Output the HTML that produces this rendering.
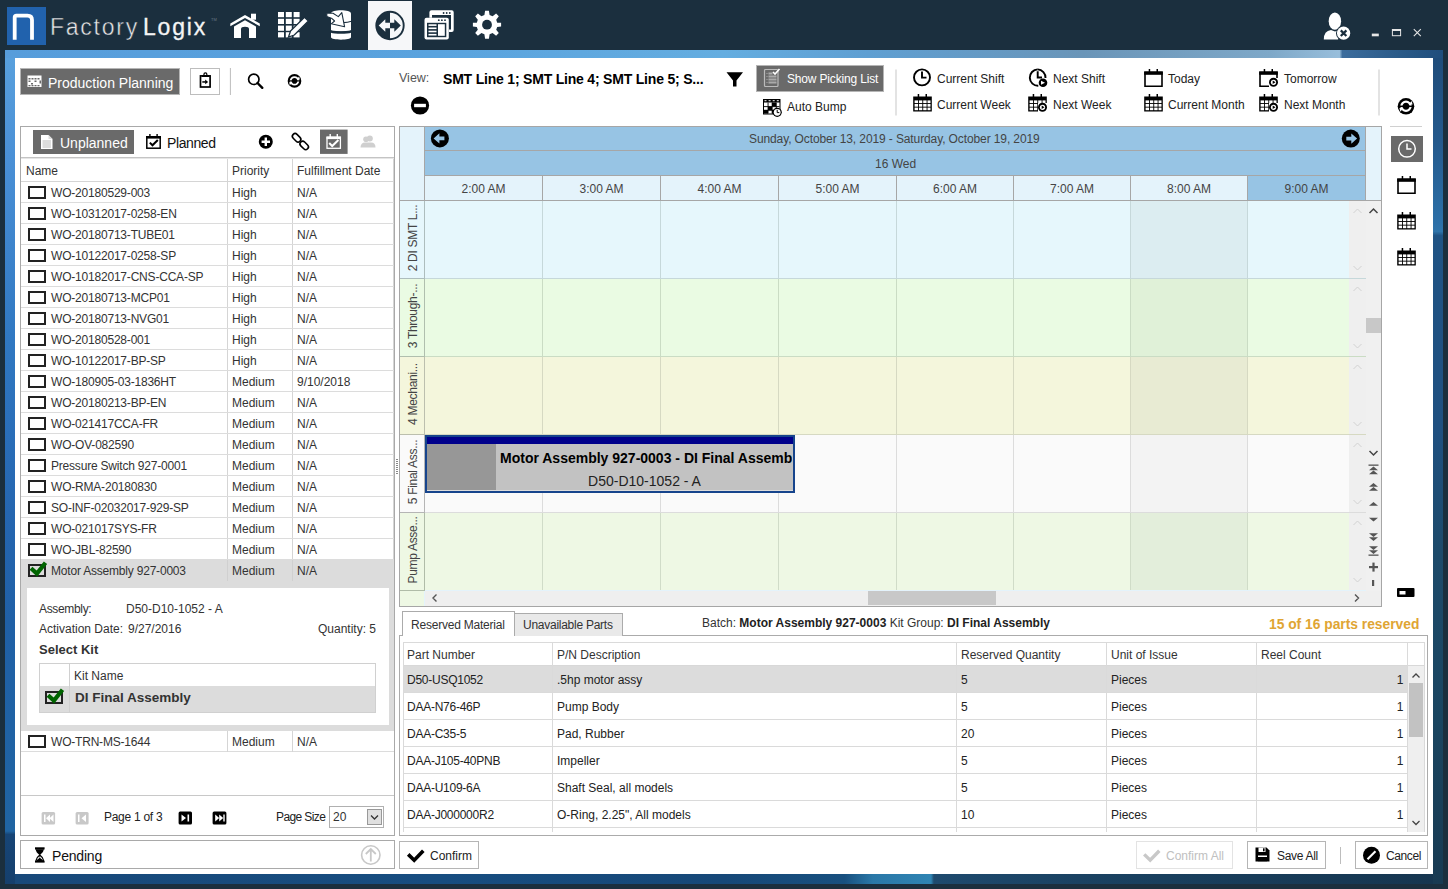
<!DOCTYPE html>
<html><head><meta charset="utf-8">
<style>
*{box-sizing:border-box;margin:0;padding:0}
html,body{width:1448px;height:889px;overflow:hidden;background:#1b2f3e;font-family:"Liberation Sans",sans-serif;font-size:12px;color:#333}
.a{position:absolute}
.t{position:absolute;white-space:nowrap;line-height:1}
svg{position:absolute;overflow:visible}
#content{left:15px;top:58px;width:1418px;height:816px;background:#fff}
.cb{width:18px;height:12.6px;border:2px solid #222;background:#fff}
</style></head><body>
<!-- TOP BAR -->
<div class="a" style="left:7px;top:7px;width:39px;height:38px;background:#2162ad"></div>
<svg style="left:7px;top:7px" width="39" height="38"><path d="M7.7 32.7 V10.2 Q7.7 8.6 9.5 8.6 H20.5 Q25 8.6 25 13 V32.7" fill="none" stroke="#fff" stroke-width="3.8"/></svg>
<div class="t" style="left:50px;top:15.5px;font-size:23px;color:#e6e6e6;letter-spacing:1.75px;-webkit-text-stroke:0.45px #1b2f3e">Factory</div>
<div class="t" style="left:143px;top:15.5px;font-size:23px;color:#f4f4f4;letter-spacing:1.8px;-webkit-text-stroke:0.3px #f4f4f4">Logix</div>
<div class="t" style="left:211px;top:18px;font-size:4px;color:#6a7a88">TM</div>
<!-- nav icons -->
<svg style="left:0;top:0" width="520" height="50">
 <g fill="#fff">
  <!-- home -->
  <path d="M230.3 23.5 L245 15 L259.8 23.5 L259.8 26.2 L245 18 L230.3 26.2 Z"/>
  <rect x="251" y="13.7" width="5" height="6"/>
  <path d="M234 26.6 L245 20.2 L256 26.6 V38 H249 V29 Q249 26.8 245 26.8 Q241 26.8 241 29 V38 H234 Z"/>
  <!-- grid -->
  <g>
   <rect x="278" y="12" width="6" height="5.2"/><rect x="285.8" y="12" width="6" height="5.2"/><rect x="293.6" y="12" width="6" height="5.2"/>
   <rect x="278" y="18.8" width="6" height="5.2"/><rect x="285.8" y="18.8" width="6" height="5.2"/><rect x="293.6" y="18.8" width="6" height="5.2"/>
   <rect x="278" y="25.6" width="6" height="5.2"/><rect x="285.8" y="25.6" width="6" height="5.2"/><rect x="293.6" y="25.6" width="6" height="5.2"/>
   <rect x="278" y="32.2" width="6" height="5.2"/><rect x="285.8" y="32.2" width="6" height="5.2"/><rect x="293.6" y="32.2" width="6" height="5.2"/>
  </g>
  <path d="M288.5 37 L290.5 31 L304.5 17.2 L308.4 21 L294.3 35 Z" stroke="#1b2f3e" stroke-width="1.3"/>
  <!-- db -->
  <path d="M331 13.5 C331 9.3 351 9.3 351 13.5 V30 C351 32 331 32 331 30 Z"/>
  <path d="M331 32.8 C334 34.2 348 34.2 351 32.8 V37.3 C351 40.4 331 40.4 331 37.3 Z"/>
  <path d="M343.5 22.6 Q347.5 22.3 351.5 21.2" fill="none" stroke="#1b2f3e" stroke-width="1.1"/>
  <path d="M331 31.2 Q341 32.8 351 31.2" fill="none" stroke="#1b2f3e" stroke-width="1.4"/>
  <path d="M326.8 13 L333 13.3 L338.3 16.6 L341.8 12.6 L344.6 26.8 L331.2 23.8 L334.6 21 L332 18.6 L326.8 16.6 Z" stroke="#1b2f3e" stroke-width="1.1" stroke-linejoin="round"/>
  <!-- windows -->
  <path d="M431.5 10.2 H451.7 Q453.7 10.2 453.7 12.2 V29.9 Q453.7 31.9 451.7 31.9 H449 V29.5 H451 V15 H432 V17.8 H429.4 V12.2 Q429.4 10.2 431.5 10.2 Z"/>
  <circle cx="443.6" cy="13" r="0.9" fill="#1b2f3e"/><circle cx="446.7" cy="13" r="0.9" fill="#1b2f3e"/><circle cx="449.8" cy="13" r="0.9" fill="#1b2f3e"/>
  <rect x="424.5" y="17.8" width="24.3" height="21.6" rx="2"/>
  <rect x="427" y="22.8" width="19.3" height="14.4" fill="#1b2f3e"/>
  <circle cx="438.8" cy="20.2" r="0.9" fill="#1b2f3e"/><circle cx="441.9" cy="20.2" r="0.9" fill="#1b2f3e"/><circle cx="445" cy="20.2" r="0.9" fill="#1b2f3e"/>
  <rect x="428.5" y="24.3" width="8" height="1.6"/><rect x="428.5" y="27.5" width="8" height="1.6"/><rect x="428.5" y="30.7" width="8" height="1.6"/><rect x="428.5" y="33.9" width="8" height="1.6"/>
  <rect x="438" y="24.2" width="6.8" height="11.6"/>
  <!-- gear -->
  <g transform="translate(487 24.7)">
   <path id="gear" d="M-1.9 -14 H1.9 L2.6 -9.6 L5.6 -8.4 L9.1 -11.1 L11.8 -8.4 L9.2 -4.9 L10.2 -2 L14.1 -1.9 V1.9 L10.2 2.3 L9.2 5 L11.8 8.4 L9.1 11.1 L5.6 8.4 L2.6 9.6 L1.9 14 H-1.9 L-2.6 9.6 L-5.6 8.4 L-9.1 11.1 L-11.8 8.4 L-9.2 5 L-10.2 2.3 L-14.1 1.9 V-1.9 L-10.2 -2 L-9.2 -4.9 L-11.8 -8.4 L-9.1 -11.1 L-5.6 -8.4 L-2.6 -9.6 Z"/>
   <circle r="4.9" fill="#1b2f3e"/>
  </g>
 </g>
</svg>
<div class="a" style="left:368px;top:1px;width:44px;height:49px;background:#f6f7f9"></div>
<svg style="left:368px;top:0" width="44" height="50">
 <circle cx="22" cy="25.5" r="13.7" fill="none" stroke="#1b2f3e" stroke-width="1.9"/>
 <path d="M22 11.8 A13.7 13.7 0 0 0 22 39.2 Z" fill="#1b2f3e"/>
 <path d="M10.7 25.5 L17.3 19.3 V22.7 H22 V28.3 H17.3 V31.7 Z" fill="#f6f7f9"/>
 <path d="M32.8 25.5 L26.3 19.3 V22.7 H22 V28.3 H26.3 V31.7 Z" fill="#1b2f3e"/>
</svg>
<!-- user + window controls -->
<svg style="left:1300px;top:0" width="148" height="50">
 <ellipse cx="34.9" cy="21.2" rx="6.2" ry="8.6" fill="#fff"/>
 <path d="M23.8 39.4 Q23.8 31 31 30 L35 31.5 L39 30 Q41 30.5 42 31.5 L38 39.4 Z" fill="#fff"/>
 <circle cx="43.6" cy="33.2" r="7.6" fill="#1b2f3e"/>
 <circle cx="43.6" cy="33.2" r="6.6" fill="#fff"/>
 <path d="M40.8 30.4 L46.4 36 M46.4 30.4 L40.8 36" stroke="#1b2f3e" stroke-width="2.2"/>
 <rect x="71.8" y="33.6" width="7" height="2.7" fill="#e6e6e6"/>
 <rect x="92.4" y="29.5" width="8.2" height="6.2" fill="none" stroke="#e6e6e6" stroke-width="1"/>
 <rect x="92" y="29" width="9" height="2" fill="#e6e6e6"/>
 <path d="M113.8 29.2 L120.8 36.2 M120.8 29.2 L113.8 36.2" stroke="#e6e6e6" stroke-width="1.1"/>
</svg>

<div class="a" style="left:5px;top:50px;width:1438px;height:8px;background:linear-gradient(90deg,#579ddb 0%,#5aa3de 30%,#64ade0 50%,#5f9fd2 60%,#6a95b8 75%,#7ea8c8 88%,#98bedb 92.8%,#3c6c9c 93%,#2a5a88 97%,#1f4d7c 100%)"></div>
<div class="a" style="left:5px;top:58px;width:10px;height:826px;background:linear-gradient(180deg,#58a0dd 0%,#4a90d6 12%,#3078c2 34%,#2566b0 55%,#2060a6 68%,#2064a2 93.6%,#174576 94%,#153f6c 100%)"></div>
<div class="a" style="left:1433px;top:58px;width:10px;height:826px;background:linear-gradient(180deg,#1f4c7a 0%,#24598c 10%,#2c70a8 20%,#2f74aa 21%,#1f5384 21.5%,#1f5080 45%,#1d4a6a 60%,#1a4560 80%,#183a52 100%)"></div>
<div class="a" style="left:15px;top:874px;width:1418px;height:10px;background:linear-gradient(90deg,#18497a 0%,#174d80 30%,#164878 50%,#18507f 58.5%,#2a78a8 60.5%,#2f84b3 64.6%,#1e4a6e 64.8%,#1a4262 75%,#163650 100%)"></div>
<div id="content" class="a"></div>

<!-- TOOLBAR -->
<div class="a" style="left:20px;top:68px;width:160px;height:27px;background:#6a6a6a;border:1px solid #b5b5b5"></div>
<svg style="left:27px;top:75px" width="16" height="13">
 <rect x="0.5" y="0.5" width="14" height="11.5" fill="#fff"/>
 <g fill="#6a6a6a"><rect x="1.5" y="3" width="2" height="1.5"/><rect x="4.5" y="3" width="2" height="1.5"/><rect x="7.5" y="3" width="2" height="1.5"/><rect x="10.5" y="3" width="2" height="1.5"/><rect x="1.5" y="5.5" width="2" height="1.5"/><rect x="7.5" y="5.5" width="2" height="1.5"/><rect x="12.5" y="5.5" width="1.5" height="3"/><rect x="4" y="8" width="2" height="1.5"/><rect x="1.5" y="10" width="2" height="1.3"/><rect x="4.5" y="10" width="2" height="1.3"/><rect x="7.5" y="10" width="2" height="1.3"/><rect x="10.5" y="10" width="2" height="1.3"/></g>
</svg>
<div class="t" style="left:48px;top:76px;font-size:14px;color:#fff">Production Planning</div>
<div class="a" style="left:190px;top:68px;width:30px;height:27px;border:1px solid #bdbdbd;background:#fff"></div>
<svg style="left:0;top:0" width="1448" height="130">
 <!-- clipboard -->
 <rect x="200.5" y="75.9" width="9.6" height="11.1" fill="none" stroke="#000" stroke-width="1.7"/>
 <rect x="202" y="75.2" width="7" height="1.8" fill="#000"/>
 <circle cx="205.4" cy="74.4" r="1.5" fill="none" stroke="#000" stroke-width="1.2"/>
 <rect x="202.3" y="81.2" width="3.5" height="1.5" fill="#000"/>
 <path d="M205.2 79.6 L208.1 81.95 L205.2 84.3 Z" fill="#000"/>
 <rect x="229.9" y="68" width="1" height="27" fill="#bdbdbd"/>
 <!-- search -->
 <circle cx="253.8" cy="79.3" r="5.2" fill="none" stroke="#000" stroke-width="1.7"/>
 <path d="M257.5 83 L262.3 87.8" stroke="#000" stroke-width="2.4" stroke-linecap="round"/>
 <!-- refresh -->
 <g transform="translate(294.5 80.9)"><use href="#refr"/></g>
 <!-- minus circle -->
 <circle cx="420" cy="105.5" r="9.1" fill="#000"/>
 <rect x="414.1" y="103.8" width="11.8" height="3.4" fill="#fff"/>
 <!-- funnel -->
 <path d="M726.5 72.3 H743 L736.5 80.5 V86.6 H733 V80.5 Z" fill="#000"/>
 <rect x="895.5" y="69.5" width="1" height="46" fill="#c8c8c8"/>
 <rect x="1378.5" y="69.5" width="1" height="46" fill="#c8c8c8"/>
 <!-- clocks -->
 <g fill="none" stroke="#000" stroke-width="1.9">
  <circle cx="922" cy="77.4" r="8"/>
  <path d="M922 71.5 V77.6 H926.5"/>
  <path d="M1037.7 69.4 A8.2 8.2 0 1 0 1038.3 85.8"/>
  <path d="M1037.7 71.3 V77.5 H1042"/>
  <path d="M1045.5 78 A8.2 8.2 0 0 0 1037.7 69.4"/>
 </g>
 <circle cx="1043" cy="82.8" r="4.3" fill="#000"/>
 <path d="M1041 80.8 L1045 82.8 L1041 84.8 Z" fill="#fff"/>
 <!-- refresh right -->
 <g transform="translate(1406 106.3) scale(1.22)"><use href="#refr"/></g>
</svg>
<!-- calendar icons (symbol) -->
<svg width="0" height="0" style="position:absolute">
 <defs>
  <g id="calE"><path d="M1 3.3 H18 V17.3 H1 Z" fill="none" stroke="#000" stroke-width="1.6"/><rect x="0.2" y="2.5" width="18.6" height="3.3" fill="#000"/><rect x="4.7" y="0" width="1.5" height="4" fill="#000"/><rect x="12.5" y="0" width="1.5" height="4" fill="#000"/></g>
  <g id="calG"><rect x="0.2" y="2.5" width="18.6" height="15" fill="#000"/><rect x="4.7" y="0" width="1.5" height="4" fill="#000"/><rect x="12.5" y="0" width="1.5" height="4" fill="#000"/><g fill="#fff"><rect x="1.6" y="6.4" width="3.4" height="2.7"/><rect x="5.9" y="6.4" width="3.4" height="2.7"/><rect x="10.2" y="6.4" width="3.4" height="2.7"/><rect x="14.5" y="6.4" width="3" height="2.7"/><rect x="1.6" y="10" width="3.4" height="2.7"/><rect x="5.9" y="10" width="3.4" height="2.7"/><rect x="10.2" y="10" width="3.4" height="2.7"/><rect x="14.5" y="10" width="3" height="2.7"/><rect x="1.6" y="13.6" width="3.4" height="2.6"/><rect x="5.9" y="13.6" width="3.4" height="2.6"/><rect x="10.2" y="13.6" width="3.4" height="2.6"/><rect x="14.5" y="13.6" width="3" height="2.6"/></g></g>
  <g id="refr"><circle r="6.8" fill="#000"/><circle r="3.8" fill="none" stroke="#fff" stroke-width="1.8"/><rect x="-5" y="-0.6" width="10" height="1.2" fill="#000"/><path d="M2.2 -1.4 L5.4 -1.4 L4.6 -4.4 Z" fill="#fff"/><path d="M-2.2 1.4 L-5.4 1.4 L-4.6 4.4 Z" fill="#fff"/></g>
  <g id="nxt"><circle cx="0" cy="0" r="4.5" fill="#000"/><circle r="2.6" fill="#fff"/><path d="M-0.8 -1.8 L2 0 L-0.8 1.8 Z" fill="#000"/></g>
 </defs>
</svg>
<svg style="left:913px;top:94px" width="19" height="18"><use href="#calG"/></svg>
<svg style="left:1028px;top:94px" width="19" height="18"><use href="#calG"/><rect x="10" y="9" width="9" height="9" fill="#fff"/><use href="#nxt" x="14.5" y="13.3"/></svg>
<svg style="left:1144px;top:68.5px" width="19" height="18"><use href="#calE"/></svg>
<svg style="left:1144px;top:94px" width="19" height="18"><use href="#calG"/></svg>
<svg style="left:1259px;top:68.5px" width="19" height="18"><use href="#calE"/><rect x="10" y="9" width="9" height="9" fill="#fff"/><use href="#nxt" x="14.5" y="13.3"/></svg>
<svg style="left:1259px;top:94px" width="19" height="18"><use href="#calG"/><rect x="10" y="9" width="9" height="9" fill="#fff"/><use href="#nxt" x="14.5" y="13.3"/></svg>

<div class="t" style="left:399px;top:72px;font-size:12.5px;color:#555">View:</div>
<div class="t" style="left:443px;top:72px;font-size:14px;font-weight:bold;color:#000;letter-spacing:-0.2px">SMT Line 1; SMT Line 4; SMT Line 5; S...</div>
<div class="a" style="left:756px;top:65px;width:128px;height:27px;background:#6a6a6a;border:1px solid #b5b5b5"></div>
<svg style="left:763px;top:68px" width="20" height="20">
 <rect x="1.5" y="1.5" width="13.5" height="17" rx="1" fill="none" stroke="#bbb" stroke-width="1.2"/>
 <g fill="#aaa"><rect x="3.5" y="5" width="1" height="1"/><rect x="3.5" y="8" width="1" height="1"/><rect x="3.5" y="11" width="1" height="1"/><rect x="3.5" y="14" width="1" height="1"/><rect x="5.5" y="4.5" width="4" height="2"/><rect x="5.5" y="7.5" width="8" height="2"/><rect x="5.5" y="10.5" width="8" height="2"/><rect x="5.5" y="13.5" width="8" height="2"/></g>
 <path d="M10 4 L12 6 L16.5 1" fill="none" stroke="#fff" stroke-width="1.6"/>
</svg>
<div class="t" style="left:787px;top:73px;font-size:12px;color:#fff;letter-spacing:-0.17px">Show Picking List</div>
<svg style="left:763px;top:99px" width="20" height="20">
 <rect x="0" y="0" width="17.5" height="15.5" fill="#000"/>
 <rect x="1" y="3.5" width="15.5" height="11" fill="#fff"/>
 <g fill="#fff"><rect x="1.5" y="1.2" width="2" height="1"/><rect x="5.6" y="1.2" width="2" height="1"/><rect x="9.7" y="1.2" width="2" height="1"/><rect x="13.8" y="1.2" width="2" height="1"/></g>
 <g fill="#000"><rect x="4.6" y="3.5" width="0.9" height="11"/><rect x="8.7" y="3.5" width="0.9" height="11"/><rect x="12.8" y="3.5" width="0.9" height="11"/><rect x="1" y="7.2" width="15.5" height="0.9"/><rect x="1" y="10.8" width="15.5" height="0.9"/>
 <rect x="9" y="3.5" width="4" height="4"/><rect x="5" y="7.5" width="4" height="3.6"/><rect x="1" y="11" width="4" height="3.6"/><rect x="9" y="11" width="4" height="3.6"/></g>
 <circle cx="14.2" cy="13.3" r="4.6" fill="#000"/><circle cx="14.2" cy="13.3" r="3.4" fill="#fff"/>
 <path d="M14.2 10.8 V13.6 H16.3" fill="none" stroke="#000" stroke-width="1"/>
</svg>
<div class="t" style="left:787px;top:101px;font-size:12px;color:#222">Auto Bump</div>
<div class="t" style="left:937px;top:73px;font-size:12px;color:#222">Current Shift</div>
<div class="t" style="left:937px;top:99px;font-size:12px;color:#222">Current Week</div>
<div class="t" style="left:1053px;top:73px;font-size:12px;color:#222">Next Shift</div>
<div class="t" style="left:1053px;top:99px;font-size:12px;color:#222">Next Week</div>
<div class="t" style="left:1168px;top:73px;font-size:12px;color:#222">Today</div>
<div class="t" style="left:1168px;top:99px;font-size:12px;color:#222">Current Month</div>
<div class="t" style="left:1284px;top:73px;font-size:12px;color:#222">Tomorrow</div>
<div class="t" style="left:1284px;top:99px;font-size:12px;color:#222">Next Month</div>


<!-- LEFT PANEL -->
<div class="a" style="left:20px;top:126px;width:375px;height:710px;border:1px solid #a9a9a9;background:#fff"></div>
<div class="a" style="left:33px;top:130px;width:101px;height:24px;background:#6a6a6a"></div>
<svg style="left:40px;top:134px" width="14" height="16">
 <path d="M1 1 H8.5 L12.5 5 V15 H1 Z" fill="#fff"/>
 <path d="M8.5 1 V5 H12.5" fill="#ddd"/>
 <g fill="#bbb"><rect x="2.5" y="6.5" width="8.5" height="1"/><rect x="2.5" y="8.5" width="8.5" height="1"/><rect x="2.5" y="10.5" width="8.5" height="1"/><rect x="2.5" y="12.5" width="8.5" height="1"/></g>
</svg>
<div class="t" style="left:60px;top:136px;font-size:14px;color:#fff">Unplanned</div>
<svg style="left:146px;top:134px" width="16" height="16">
 <rect x="0.8" y="2.8" width="13.4" height="11.4" fill="none" stroke="#000" stroke-width="1.5"/>
 <rect x="0" y="2" width="15" height="2.6" fill="#000"/>
 <rect x="3.2" y="0" width="1.4" height="3" fill="#000"/><rect x="10.4" y="0" width="1.4" height="3" fill="#000"/>
 <path d="M3.8 8.6 L6.5 11.3 L11.8 6" fill="none" stroke="#000" stroke-width="2"/>
</svg>
<div class="t" style="left:167px;top:136px;font-size:14px;color:#111;letter-spacing:-0.4px">Planned</div>
<svg style="left:250px;top:128px" width="140" height="28">
 <circle cx="15.8" cy="13.8" r="7" fill="#000"/>
 <path d="M15.8 9.6 V18 M11.6 13.8 H20" stroke="#fff" stroke-width="2.4"/>
 <g fill="none" stroke="#000" stroke-width="1.6">
  <rect x="-4.8" y="-2.7" width="9.6" height="5.4" rx="2.7" transform="translate(46.6 9.8) rotate(45)"/>
  <rect x="-4.8" y="-2.7" width="9.6" height="5.4" rx="2.7" transform="translate(54.2 17.4) rotate(45)"/>
 </g>
 <rect x="70" y="1.6" width="27.6" height="24.3" fill="#6a6a6a"/>
 <rect x="77" y="9.3" width="13.4" height="11" fill="none" stroke="#fff" stroke-width="1.3"/>
 <rect x="76.5" y="8.5" width="14.4" height="2.6" fill="#fff"/>
 <rect x="79.5" y="6" width="1.4" height="3" fill="#fff"/><rect x="86.6" y="6" width="1.4" height="3" fill="#fff"/>
 <path d="M79.2 15 L82.2 18 L88.4 12" fill="none" stroke="#fff" stroke-width="2"/>
 <g fill="#cfcfcf">
  <circle cx="119.8" cy="10.4" r="3"/><circle cx="116" cy="11.2" r="2.8"/>
  <path d="M110.5 19.4 Q110.8 14.8 115 14.6 H121 Q125.5 14.8 125.5 19.4 Z"/>
 </g>
</svg>
<div class="a" style="left:21px;top:157px;width:373px;height:1px;background:#c4c4c4"></div>
<div class="a" style="left:21px;top:158px;width:373px;height:1px;background:#e6e6e6"></div>
<div class="a" style="left:21px;top:181px;width:373px;height:1px;background:#d5d5d5"></div>
<div class="a" style="left:227px;top:159px;width:1px;height:401px;background:#d5d5d5"></div>
<div class="a" style="left:292px;top:159px;width:1px;height:401px;background:#d5d5d5"></div>
<div class="a" style="left:393px;top:159px;width:1px;height:401px;background:#d5d5d5"></div>
<div class="t" style="left:26px;top:165px;color:#333">Name</div>
<div class="t" style="left:232px;top:165px;color:#333">Priority</div>
<div class="t" style="left:297px;top:165px;color:#333">Fulfillment Date</div>

<div class="a cb" style="left:28px;top:186px"></div><div class="t" style="left:51px;top:187px;letter-spacing:-0.2px">WO-20180529-003</div><div class="t" style="left:232px;top:187px">High</div><div class="t" style="left:297px;top:187px">N/A</div><div class="a" style="left:21px;top:202px;width:373px;height:1px;background:#dcdcdc"></div>
<div class="a cb" style="left:28px;top:207px"></div><div class="t" style="left:51px;top:208px;letter-spacing:-0.2px">WO-10312017-0258-EN</div><div class="t" style="left:232px;top:208px">High</div><div class="t" style="left:297px;top:208px">N/A</div><div class="a" style="left:21px;top:223px;width:373px;height:1px;background:#dcdcdc"></div>
<div class="a cb" style="left:28px;top:228px"></div><div class="t" style="left:51px;top:229px;letter-spacing:-0.2px">WO-20180713-TUBE01</div><div class="t" style="left:232px;top:229px">High</div><div class="t" style="left:297px;top:229px">N/A</div><div class="a" style="left:21px;top:244px;width:373px;height:1px;background:#dcdcdc"></div>
<div class="a cb" style="left:28px;top:249px"></div><div class="t" style="left:51px;top:250px;letter-spacing:-0.2px">WO-10122017-0258-SP</div><div class="t" style="left:232px;top:250px">High</div><div class="t" style="left:297px;top:250px">N/A</div><div class="a" style="left:21px;top:265px;width:373px;height:1px;background:#dcdcdc"></div>
<div class="a cb" style="left:28px;top:270px"></div><div class="t" style="left:51px;top:271px;letter-spacing:-0.2px">WO-10182017-CNS-CCA-SP</div><div class="t" style="left:232px;top:271px">High</div><div class="t" style="left:297px;top:271px">N/A</div><div class="a" style="left:21px;top:286px;width:373px;height:1px;background:#dcdcdc"></div>
<div class="a cb" style="left:28px;top:291px"></div><div class="t" style="left:51px;top:292px;letter-spacing:-0.2px">WO-20180713-MCP01</div><div class="t" style="left:232px;top:292px">High</div><div class="t" style="left:297px;top:292px">N/A</div><div class="a" style="left:21px;top:307px;width:373px;height:1px;background:#dcdcdc"></div>
<div class="a cb" style="left:28px;top:312px"></div><div class="t" style="left:51px;top:313px;letter-spacing:-0.2px">WO-20180713-NVG01</div><div class="t" style="left:232px;top:313px">High</div><div class="t" style="left:297px;top:313px">N/A</div><div class="a" style="left:21px;top:328px;width:373px;height:1px;background:#dcdcdc"></div>
<div class="a cb" style="left:28px;top:333px"></div><div class="t" style="left:51px;top:334px;letter-spacing:-0.2px">WO-20180528-001</div><div class="t" style="left:232px;top:334px">High</div><div class="t" style="left:297px;top:334px">N/A</div><div class="a" style="left:21px;top:349px;width:373px;height:1px;background:#dcdcdc"></div>
<div class="a cb" style="left:28px;top:354px"></div><div class="t" style="left:51px;top:355px;letter-spacing:-0.2px">WO-10122017-BP-SP</div><div class="t" style="left:232px;top:355px">High</div><div class="t" style="left:297px;top:355px">N/A</div><div class="a" style="left:21px;top:370px;width:373px;height:1px;background:#dcdcdc"></div>
<div class="a cb" style="left:28px;top:375px"></div><div class="t" style="left:51px;top:376px;letter-spacing:-0.2px">WO-180905-03-1836HT</div><div class="t" style="left:232px;top:376px">Medium</div><div class="t" style="left:297px;top:376px">9/10/2018</div><div class="a" style="left:21px;top:391px;width:373px;height:1px;background:#dcdcdc"></div>
<div class="a cb" style="left:28px;top:396px"></div><div class="t" style="left:51px;top:397px;letter-spacing:-0.2px">WO-20180213-BP-EN</div><div class="t" style="left:232px;top:397px">Medium</div><div class="t" style="left:297px;top:397px">N/A</div><div class="a" style="left:21px;top:412px;width:373px;height:1px;background:#dcdcdc"></div>
<div class="a cb" style="left:28px;top:417px"></div><div class="t" style="left:51px;top:418px;letter-spacing:-0.2px">WO-021417CCA-FR</div><div class="t" style="left:232px;top:418px">Medium</div><div class="t" style="left:297px;top:418px">N/A</div><div class="a" style="left:21px;top:433px;width:373px;height:1px;background:#dcdcdc"></div>
<div class="a cb" style="left:28px;top:438px"></div><div class="t" style="left:51px;top:439px;letter-spacing:-0.2px">WO-OV-082590</div><div class="t" style="left:232px;top:439px">Medium</div><div class="t" style="left:297px;top:439px">N/A</div><div class="a" style="left:21px;top:454px;width:373px;height:1px;background:#dcdcdc"></div>
<div class="a cb" style="left:28px;top:459px"></div><div class="t" style="left:51px;top:460px;letter-spacing:-0.2px">Pressure Switch 927-0001</div><div class="t" style="left:232px;top:460px">Medium</div><div class="t" style="left:297px;top:460px">N/A</div><div class="a" style="left:21px;top:475px;width:373px;height:1px;background:#dcdcdc"></div>
<div class="a cb" style="left:28px;top:480px"></div><div class="t" style="left:51px;top:481px;letter-spacing:-0.2px">WO-RMA-20180830</div><div class="t" style="left:232px;top:481px">Medium</div><div class="t" style="left:297px;top:481px">N/A</div><div class="a" style="left:21px;top:496px;width:373px;height:1px;background:#dcdcdc"></div>
<div class="a cb" style="left:28px;top:501px"></div><div class="t" style="left:51px;top:502px;letter-spacing:-0.2px">SO-INF-02032017-929-SP</div><div class="t" style="left:232px;top:502px">Medium</div><div class="t" style="left:297px;top:502px">N/A</div><div class="a" style="left:21px;top:517px;width:373px;height:1px;background:#dcdcdc"></div>
<div class="a cb" style="left:28px;top:522px"></div><div class="t" style="left:51px;top:523px;letter-spacing:-0.2px">WO-021017SYS-FR</div><div class="t" style="left:232px;top:523px">Medium</div><div class="t" style="left:297px;top:523px">N/A</div><div class="a" style="left:21px;top:538px;width:373px;height:1px;background:#dcdcdc"></div>
<div class="a cb" style="left:28px;top:543px"></div><div class="t" style="left:51px;top:544px;letter-spacing:-0.2px">WO-JBL-82590</div><div class="t" style="left:232px;top:544px">Medium</div><div class="t" style="left:297px;top:544px">N/A</div><div class="a" style="left:21px;top:559px;width:373px;height:1px;background:#dcdcdc"></div>

<div class="a" style="left:21px;top:560px;width:373px;height:171px;background:#dcdcdc"></div>
<div class="a" style="left:227px;top:560px;width:1px;height:21px;background:#d0d0d0"></div>
<div class="a" style="left:292px;top:560px;width:1px;height:21px;background:#d0d0d0"></div>
<div class="a cb" style="left:28px;top:564px;background:#dcdcdc"></div>
<svg style="left:28px;top:561px" width="20" height="16"><path d="M3 7.2 L8.9 12.6 L17.5 1.8" fill="none" stroke="#006400" stroke-width="4.2"/></svg>
<div class="t" style="left:51px;top:565px;letter-spacing:-0.2px">Motor Assembly 927-0003</div><div class="t" style="left:232px;top:565px">Medium</div><div class="t" style="left:297px;top:565px">N/A</div>
<div class="a" style="left:27px;top:588px;width:362px;height:137px;background:#fff"></div>
<div class="t" style="left:39px;top:603px;color:#333;letter-spacing:-0.33px">Assembly:</div>
<div class="t" style="left:126px;top:603px;color:#333">D50-D10-1052 - A</div>
<div class="t" style="left:39px;top:623px;color:#333">Activation Date:</div>
<div class="t" style="left:128px;top:623px;color:#333">9/27/2016</div>
<div class="t" style="left:318px;top:623px;color:#333">Quantity: 5</div>
<div class="t" style="left:39px;top:643px;font-size:13px;font-weight:bold;color:#333">Select Kit</div>
<div class="a" style="left:39px;top:663px;width:337px;height:50px;border:1px solid #d0d0d0;background:#fff"></div>
<div class="a" style="left:40px;top:686px;width:335px;height:26px;background:#dcdcdc"></div>
<div class="a" style="left:69px;top:664px;width:1px;height:48px;background:#d0d0d0"></div>
<div class="t" style="left:74px;top:670px;color:#333">Kit Name</div>
<div class="a cb" style="left:45px;top:691px;background:#dcdcdc"></div>
<svg style="left:45px;top:688px" width="20" height="16"><path d="M3 7.2 L8.9 12.6 L17.5 1.8" fill="none" stroke="#006400" stroke-width="4.2"/></svg>
<div class="t" style="left:75px;top:691px;font-size:13.5px;font-weight:bold;color:#333">DI Final Assembly</div>
<div class="a cb" style="left:28px;top:735px"></div><div class="t" style="left:51px;top:736px;letter-spacing:-0.2px">WO-TRN-MS-1644</div><div class="t" style="left:232px;top:736px">Medium</div><div class="t" style="left:297px;top:736px">N/A</div>
<div class="a" style="left:21px;top:751px;width:373px;height:1px;background:#dcdcdc"></div>
<div class="a" style="left:227px;top:731px;width:1px;height:21px;background:#d5d5d5"></div>
<div class="a" style="left:292px;top:731px;width:1px;height:21px;background:#d5d5d5"></div>
<div class="a" style="left:21px;top:795px;width:373px;height:1px;background:#c8c8c8"></div>
<!-- pager -->
<svg style="left:0;top:800px" width="400" height="40">
 <g fill="#c8c8c8"><rect x="41.6" y="12" width="13.5" height="12.5" rx="1.5"/><rect x="75.6" y="12" width="13" height="12.5" rx="1.5"/></g>
 <g fill="#fff"><rect x="44" y="14.5" width="1.5" height="7.5"/><path d="M50 14.5 L46 18.2 L50 22 Z"/><path d="M53.5 14.5 L49.5 18.2 L53.5 22 Z"/><rect x="78" y="14.5" width="1.5" height="7.5"/><path d="M86 14.5 L81.5 18.2 L86 22 Z"/></g>
 <g fill="#000"><rect x="178.6" y="11.5" width="13.4" height="13" rx="1.5"/><rect x="212.6" y="11.5" width="13.8" height="13" rx="1.5"/></g>
 <g fill="#fff"><path d="M181.5 14.5 L186 18 L181.5 21.5 Z"/><rect x="187.5" y="14.5" width="1.6" height="7"/><path d="M215.2 14.5 L219.2 18 L215.2 21.5 Z"/><path d="M219.2 14.5 L223.2 18 L219.2 21.5 Z"/><rect x="223.3" y="14.5" width="1.4" height="7"/></g>
</svg>
<div class="t" style="left:104px;top:811px;color:#222;letter-spacing:-0.28px">Page 1 of 3</div>
<div class="t" style="left:276px;top:811px;color:#222;letter-spacing:-0.6px">Page Size</div>
<div class="a" style="left:329px;top:806px;width:55px;height:22px;border:1px solid #b0b0b0;background:#fff"></div>
<div class="t" style="left:333px;top:811px;color:#333">20</div>
<div class="a" style="left:367px;top:809px;width:15px;height:16px;border:1px solid #999;background:#e0e0e0"></div>
<svg style="left:367px;top:809px" width="15" height="16"><path d="M4 6.5 L7.5 10 L11 6.5" fill="none" stroke="#333" stroke-width="1.3"/></svg>
<!-- pending -->
<div class="a" style="left:20px;top:840px;width:375px;height:29px;border:1px solid #a9a9a9;background:#fff"></div>
<svg style="left:33px;top:846px" width="14" height="18">
 <rect x="2" y="1.3" width="9.6" height="2.2" fill="#000"/>
 <path d="M2.6 3.3 H11 Q10.6 6.6 6.8 9.2 Q3 6.6 2.6 3.3 Z" fill="#000"/>
 <path d="M6.8 9 Q3.4 11.4 2.8 15 M6.8 9 Q10.2 11.4 10.8 15" fill="none" stroke="#000" stroke-width="1.3"/>
 <path d="M6.8 9.5 V11.5" stroke="#000" stroke-width="0.8"/>
 <path d="M6.8 11.8 Q9.6 13.5 10.6 15 H3 Q4 13.5 6.8 11.8 Z" fill="#000"/>
 <rect x="2" y="14.9" width="9.6" height="1.7" fill="#000"/>
</svg>
<div class="t" style="left:52px;top:849px;font-size:14px;color:#111;letter-spacing:-0.2px">Pending</div>
<svg style="left:355px;top:840px" width="30" height="30">
 <circle cx="15.8" cy="15" r="9.2" fill="none" stroke="#c8c8c8" stroke-width="1.6"/>
 <path d="M15.8 21.5 V9 M10.8 14 L15.8 9 L20.8 14" fill="none" stroke="#c8c8c8" stroke-width="1.8"/>
</svg>


<svg style="left:396px;top:459px" width="3" height="16"><g fill="#888"><rect x="0" y="0" width="2" height="1"/><rect x="0" y="2" width="2" height="1"/><rect x="0" y="4" width="2" height="1"/><rect x="0" y="6" width="2" height="1"/><rect x="0" y="8" width="2" height="1"/><rect x="0" y="10" width="2" height="1"/><rect x="0" y="12" width="2" height="1"/><rect x="0" y="14" width="2" height="1"/></g></svg>
<!-- SCHEDULER -->
<div class="a" style="left:399px;top:126px;width:983px;height:481px;border:1px solid #a6a6a6;background:#e4f3fb"></div>
<div class="a" style="left:425px;top:127px;width:940px;height:48px;background:#97c4e4"></div>
<div class="a" style="left:1248px;top:175px;width:117px;height:25px;background:#97c4e4"></div>
<div class="a" style="left:424px;top:127px;width:1px;height:463px;background:#a6a6a6"></div>
<div class="a" style="left:1365px;top:127px;width:1px;height:73px;background:#a6a6a6"></div>
<div class="a" style="left:425px;top:150px;width:940px;height:1px;background:#a6a6a6"></div>
<div class="a" style="left:425px;top:175px;width:940px;height:1px;background:#a6a6a6"></div>
<div class="a" style="left:400px;top:200px;width:981px;height:1px;background:#a6a6a6"></div>
<div class="t" style="left:749px;top:133px;color:#444;letter-spacing:-0.11px">Sunday, October 13, 2019 - Saturday, October 19, 2019</div>
<div class="t" style="left:875px;top:158px;color:#444">16 Wed</div>
<svg style="left:430px;top:129px" width="20" height="20"><circle cx="9.9" cy="9.4" r="9" fill="#000"/><path d="M3.6 9.4 L9.4 4.3 V7.5 H14.4 V11.3 H9.4 V14.5 Z" fill="#97c4e4"/></svg>
<svg style="left:1341px;top:129px" width="20" height="20"><circle cx="9.8" cy="9.6" r="9" fill="#000"/><path d="M16.1 9.6 L10.3 4.5 V7.7 H5.3 V11.5 H10.3 V14.7 Z" fill="#97c4e4"/></svg>

<div class="t" style="left:425px;width:117px;text-align:center;top:183px;color:#444">2:00 AM</div>
<div class="t" style="left:543px;width:117px;text-align:center;top:183px;color:#444">3:00 AM</div>
<div class="a" style="left:542px;top:175px;width:1px;height:25px;background:#a6a6a6"></div>
<div class="t" style="left:661px;width:117px;text-align:center;top:183px;color:#444">4:00 AM</div>
<div class="a" style="left:660px;top:175px;width:1px;height:25px;background:#a6a6a6"></div>
<div class="t" style="left:779px;width:117px;text-align:center;top:183px;color:#444">5:00 AM</div>
<div class="a" style="left:778px;top:175px;width:1px;height:25px;background:#a6a6a6"></div>
<div class="t" style="left:897px;width:116px;text-align:center;top:183px;color:#444">6:00 AM</div>
<div class="a" style="left:896px;top:175px;width:1px;height:25px;background:#a6a6a6"></div>
<div class="t" style="left:1014px;width:116px;text-align:center;top:183px;color:#444">7:00 AM</div>
<div class="a" style="left:1013px;top:175px;width:1px;height:25px;background:#a6a6a6"></div>
<div class="t" style="left:1131px;width:116px;text-align:center;top:183px;color:#444">8:00 AM</div>
<div class="a" style="left:1130px;top:175px;width:1px;height:25px;background:#a6a6a6"></div>
<div class="t" style="left:1248px;width:117px;text-align:center;top:183px;color:#444">9:00 AM</div>
<div class="a" style="left:1247px;top:175px;width:1px;height:25px;background:#a6a6a6"></div>
<div class="a" style="left:400px;top:201px;width:24px;height:77px;background:#e6f7fc"></div>
<div class="a" style="left:424px;top:201px;width:1px;height:78px;background:#adbdbd"></div>
<div class="a" style="left:425px;top:201px;width:924px;height:77px;background:#e6f7fc"></div>
<div class="a" style="left:1131px;top:201px;width:116px;height:77px;background:#dcedf1"></div>
<div class="a" style="left:542px;top:201px;width:1px;height:77px;background:#c6d8da"></div>
<div class="a" style="left:660px;top:201px;width:1px;height:77px;background:#c6d8da"></div>
<div class="a" style="left:778px;top:201px;width:1px;height:77px;background:#c6d8da"></div>
<div class="a" style="left:896px;top:201px;width:1px;height:77px;background:#c6d8da"></div>
<div class="a" style="left:1013px;top:201px;width:1px;height:77px;background:#c6d8da"></div>
<div class="a" style="left:1130px;top:201px;width:1px;height:77px;background:#c6d8da"></div>
<div class="a" style="left:1247px;top:201px;width:1px;height:77px;background:#c6d8da"></div>
<div class="a" style="left:1349px;top:201px;width:17px;height:77px;background:#efefef"></div>
<svg style="left:1349px;top:201px" width="17" height="77"><path d="M4.5 12 L8.5 8 L12.5 12 M4.5 65 L8.5 69 L12.5 65" fill="none" stroke="#d2d2d2" stroke-width="1"/></svg>
<div class="a" style="left:400px;top:278px;width:24px;height:1px;background:#adbdbd"></div>
<div class="a" style="left:425px;top:278px;width:941px;height:1px;background:#c6d8da"></div>
<div class="t" style="left:367.5px;top:232.0px;width:90px;text-align:center;transform:rotate(-90deg);color:#444;letter-spacing:-0.3px">2 DI SMT L...</div>
<div class="a" style="left:400px;top:279px;width:24px;height:77px;background:#eafbe3"></div>
<div class="a" style="left:424px;top:279px;width:1px;height:78px;background:#b0bfae"></div>
<div class="a" style="left:425px;top:279px;width:924px;height:77px;background:#eafbe3"></div>
<div class="a" style="left:1131px;top:279px;width:116px;height:77px;background:#e0f1d8"></div>
<div class="a" style="left:542px;top:279px;width:1px;height:77px;background:#cadcc4"></div>
<div class="a" style="left:660px;top:279px;width:1px;height:77px;background:#cadcc4"></div>
<div class="a" style="left:778px;top:279px;width:1px;height:77px;background:#cadcc4"></div>
<div class="a" style="left:896px;top:279px;width:1px;height:77px;background:#cadcc4"></div>
<div class="a" style="left:1013px;top:279px;width:1px;height:77px;background:#cadcc4"></div>
<div class="a" style="left:1130px;top:279px;width:1px;height:77px;background:#cadcc4"></div>
<div class="a" style="left:1247px;top:279px;width:1px;height:77px;background:#cadcc4"></div>
<div class="a" style="left:1349px;top:279px;width:17px;height:77px;background:#efefef"></div>
<svg style="left:1349px;top:279px" width="17" height="77"><path d="M4.5 12 L8.5 8 L12.5 12 M4.5 65 L8.5 69 L12.5 65" fill="none" stroke="#d2d2d2" stroke-width="1"/></svg>
<div class="a" style="left:400px;top:356px;width:24px;height:1px;background:#b0bfae"></div>
<div class="a" style="left:425px;top:356px;width:941px;height:1px;background:#cadcc4"></div>
<div class="t" style="left:367.5px;top:310.0px;width:90px;text-align:center;transform:rotate(-90deg);color:#444;letter-spacing:-0.3px">3 Through-...</div>
<div class="a" style="left:400px;top:357px;width:24px;height:77px;background:#f4f6dc"></div>
<div class="a" style="left:424px;top:357px;width:1px;height:78px;background:#bcbfae"></div>
<div class="a" style="left:425px;top:357px;width:924px;height:77px;background:#f4f6dc"></div>
<div class="a" style="left:1131px;top:357px;width:116px;height:77px;background:#e8ebd3"></div>
<div class="a" style="left:542px;top:357px;width:1px;height:77px;background:#d6d9c2"></div>
<div class="a" style="left:660px;top:357px;width:1px;height:77px;background:#d6d9c2"></div>
<div class="a" style="left:778px;top:357px;width:1px;height:77px;background:#d6d9c2"></div>
<div class="a" style="left:896px;top:357px;width:1px;height:77px;background:#d6d9c2"></div>
<div class="a" style="left:1013px;top:357px;width:1px;height:77px;background:#d6d9c2"></div>
<div class="a" style="left:1130px;top:357px;width:1px;height:77px;background:#d6d9c2"></div>
<div class="a" style="left:1247px;top:357px;width:1px;height:77px;background:#d6d9c2"></div>
<div class="a" style="left:1349px;top:357px;width:17px;height:77px;background:#efefef"></div>
<svg style="left:1349px;top:357px" width="17" height="77"><path d="M4.5 12 L8.5 8 L12.5 12 M4.5 65 L8.5 69 L12.5 65" fill="none" stroke="#d2d2d2" stroke-width="1"/></svg>
<div class="a" style="left:400px;top:434px;width:24px;height:1px;background:#bcbfae"></div>
<div class="a" style="left:425px;top:434px;width:941px;height:1px;background:#d6d9c2"></div>
<div class="t" style="left:367.5px;top:388.0px;width:90px;text-align:center;transform:rotate(-90deg);color:#444;letter-spacing:-0.3px">4 Mechani...</div>
<div class="a" style="left:400px;top:435px;width:24px;height:77px;background:#fafafa"></div>
<div class="a" style="left:424px;top:435px;width:1px;height:78px;background:#b5b5b5"></div>
<div class="a" style="left:425px;top:435px;width:924px;height:77px;background:#fafafa"></div>
<div class="a" style="left:1131px;top:435px;width:116px;height:77px;background:#f3f3f3"></div>
<div class="a" style="left:542px;top:435px;width:1px;height:77px;background:#dcdcdc"></div>
<div class="a" style="left:660px;top:435px;width:1px;height:77px;background:#dcdcdc"></div>
<div class="a" style="left:778px;top:435px;width:1px;height:77px;background:#dcdcdc"></div>
<div class="a" style="left:896px;top:435px;width:1px;height:77px;background:#dcdcdc"></div>
<div class="a" style="left:1013px;top:435px;width:1px;height:77px;background:#dcdcdc"></div>
<div class="a" style="left:1130px;top:435px;width:1px;height:77px;background:#dcdcdc"></div>
<div class="a" style="left:1247px;top:435px;width:1px;height:77px;background:#dcdcdc"></div>
<div class="a" style="left:1349px;top:435px;width:17px;height:77px;background:#efefef"></div>
<svg style="left:1349px;top:435px" width="17" height="77"><path d="M4.5 12 L8.5 8 L12.5 12 M4.5 65 L8.5 69 L12.5 65" fill="none" stroke="#d2d2d2" stroke-width="1"/></svg>
<div class="a" style="left:400px;top:512px;width:24px;height:1px;background:#b5b5b5"></div>
<div class="a" style="left:425px;top:512px;width:941px;height:1px;background:#dcdcdc"></div>
<div class="t" style="left:367.5px;top:466.0px;width:90px;text-align:center;transform:rotate(-90deg);color:#444;letter-spacing:-0.3px">5 Final Ass...</div>
<div class="a" style="left:400px;top:513px;width:24px;height:77px;background:#eef8e4"></div>
<div class="a" style="left:424px;top:513px;width:1px;height:78px;background:#b0bca8"></div>
<div class="a" style="left:425px;top:513px;width:924px;height:77px;background:#eef8e4"></div>
<div class="a" style="left:1131px;top:513px;width:116px;height:77px;background:#e3eedb"></div>
<div class="a" style="left:542px;top:513px;width:1px;height:77px;background:#d0dcc8"></div>
<div class="a" style="left:660px;top:513px;width:1px;height:77px;background:#d0dcc8"></div>
<div class="a" style="left:778px;top:513px;width:1px;height:77px;background:#d0dcc8"></div>
<div class="a" style="left:896px;top:513px;width:1px;height:77px;background:#d0dcc8"></div>
<div class="a" style="left:1013px;top:513px;width:1px;height:77px;background:#d0dcc8"></div>
<div class="a" style="left:1130px;top:513px;width:1px;height:77px;background:#d0dcc8"></div>
<div class="a" style="left:1247px;top:513px;width:1px;height:77px;background:#d0dcc8"></div>
<div class="a" style="left:1349px;top:513px;width:17px;height:77px;background:#efefef"></div>
<svg style="left:1349px;top:513px" width="17" height="77"><path d="M4.5 12 L8.5 8 L12.5 12 M4.5 65 L8.5 69 L12.5 65" fill="none" stroke="#d2d2d2" stroke-width="1"/></svg>
<div class="a" style="left:400px;top:590px;width:24px;height:1px;background:#b0bca8"></div>
<div class="t" style="left:367.5px;top:544.0px;width:90px;text-align:center;transform:rotate(-90deg);color:#444;letter-spacing:-0.3px">Pump Asse...</div>

<div class="a" style="left:400px;top:591px;width:24px;height:15px;background:#eef8e4"></div>
<div class="a" style="left:425px;top:591px;width:956px;height:15px;background:#efefef"></div>
<div class="a" style="left:868px;top:591px;width:128px;height:14px;background:#c8c8c8"></div>
<svg style="left:425px;top:590px" width="941" height="16"><path d="M11.5 4.5 L8 8 L11.5 11.5 M930 4.5 L933.5 8 L930 11.5" fill="none" stroke="#555" stroke-width="1.4"/></svg>
<div class="a" style="left:1366px;top:201px;width:15px;height:390px;background:#f0f0f0"></div>
<div class="a" style="left:1366px;top:318px;width:15px;height:15px;background:#c8c8c8"></div>
<svg style="left:1366px;top:200px" width="16" height="406">
 <g fill="none" stroke="#444" stroke-width="1.5"><path d="M3.5 13 L7.5 9 L11.5 13"/><path d="M3.5 251 L7.5 255 L11.5 251"/></g>
 <g fill="#555">
  <rect x="2.5" y="264.5" width="10" height="1.3"/><path d="M7.5 266.5 L12 270.3 H3 Z"/><path d="M7.5 270.5 L12 274.3 H3 Z"/>
  <path d="M7.5 283 L12 286.8 H3 Z"/><path d="M7.5 287 L12 290.8 H3 Z"/>
  <path d="M7.5 302 L12 305.8 H3 Z"/>
  <path d="M7.5 321.5 L12 317.7 H3 Z"/>
  <path d="M7.5 337 L12 333.2 H3 Z"/><path d="M7.5 341 L12 337.2 H3 Z"/>
  <path d="M7.5 350 L12 346.2 H3 Z"/><path d="M7.5 354 L12 350.2 H3 Z"/><rect x="2.5" y="354.5" width="10" height="1.3"/>
  <rect x="3" y="366" width="9" height="2.2"/><rect x="6.4" y="362.6" width="2.2" height="9"/>
  <rect x="6" y="380" width="2.2" height="6"/>
 </g>
</svg>

<!-- event block -->
<div class="a" style="left:425px;top:435px;width:370px;height:58px;border:2px solid #16448c;background:#dcdcdc"></div><div class="a" style="left:427px;top:444px;width:366px;height:46px;background:#c2c2c2"></div>
<div class="a" style="left:427px;top:437px;width:366px;height:7px;background:#00008b"></div>
<div class="a" style="left:427px;top:444px;width:69px;height:46px;background:#979797"></div>
<div class="a" style="left:500px;top:449px;width:292px;height:18px;overflow:hidden"><div class="t" style="left:0;top:2px;font-size:14px;font-weight:bold;color:#000">Motor Assembly 927-0003 - DI Final Assembly</div></div>
<div class="t" style="left:496px;width:297px;text-align:center;top:474px;font-size:14px;color:#222">D50-D10-1052 - A</div>
<!-- right icons -->
<div class="a" style="left:1390px;top:126px;width:32px;height:1px;background:#d0d0d0"></div>
<div class="a" style="left:1391px;top:136px;width:32px;height:26px;background:#6a6a6a"></div>
<svg style="left:1391px;top:136px" width="32" height="26"><circle cx="16" cy="12.8" r="8.3" fill="none" stroke="#fff" stroke-width="1.5"/><path d="M16 7.5 V13 H20.5" fill="none" stroke="#fff" stroke-width="1.5"/></svg>
<svg style="left:1397px;top:176px" width="19" height="18"><use href="#calE"/></svg>
<svg style="left:1397px;top:212px" width="19" height="18"><use href="#calG"/></svg>
<svg style="left:1397px;top:248px" width="19" height="18"><use href="#calG"/></svg>
<svg style="left:1396px;top:587px" width="20" height="12"><rect x="1" y="1" width="17.5" height="9" rx="1" fill="#000"/><rect x="3.5" y="4" width="6" height="3.5" fill="#fff"/></svg>


<!-- BOTTOM GRID -->
<div class="a" style="left:399px;top:635px;width:1029px;height:201px;border:1px solid #ababab;background:#fff"></div>
<div class="a" style="left:514px;top:613px;width:109px;height:23px;border:1px solid #ababab;border-bottom:none;background:#e9e9e9"></div>
<div class="a" style="left:402px;top:611px;width:113px;height:25px;border:1px solid #ababab;border-bottom:none;background:#fff"></div>
<div class="a" style="left:403px;top:635px;width:111px;height:1px;background:#fff"></div>
<div class="t" style="left:411px;top:619px;color:#333;letter-spacing:-0.22px">Reserved Material</div>
<div class="t" style="left:523px;top:619px;color:#333;letter-spacing:-0.26px">Unavailable Parts</div>
<div class="t" style="left:702px;top:617px;color:#333">Batch: <b style="color:#222">Motor Assembly 927-0003</b> Kit Group: <b style="color:#222">DI Final Assembly</b></div>
<div class="t" style="left:1269px;top:617.5px;font-size:13.8px;font-weight:bold;color:#e0a533">15 of 16 parts reserved</div>
<div class="a" style="left:403px;top:642px;width:1022px;height:190px;border:1px solid #dadada;border-bottom:none;background:#fff"></div>
<div class="a" style="left:404px;top:665px;width:1003px;height:27px;background:#dcdcdc"></div>
<div class="a" style="left:404px;top:665px;width:1020px;height:1px;background:#d8d8d8"></div>

<div class="a" style="left:552px;top:643px;width:1px;height:189px;background:#dadada"></div>
<div class="a" style="left:956px;top:643px;width:1px;height:189px;background:#dadada"></div>
<div class="a" style="left:1106px;top:643px;width:1px;height:189px;background:#dadada"></div>
<div class="a" style="left:1256px;top:643px;width:1px;height:189px;background:#dadada"></div>
<div class="a" style="left:1407px;top:643px;width:1px;height:189px;background:#dadada"></div>
<div class="t" style="left:407px;top:649px;color:#333">Part Number</div>
<div class="t" style="left:557px;top:649px;color:#333">P/N Description</div>
<div class="t" style="left:961px;top:649px;color:#333">Reserved Quantity</div>
<div class="t" style="left:1111px;top:649px;color:#333">Unit of Issue</div>
<div class="t" style="left:1261px;top:649px;color:#333">Reel Count</div>
<div class="t" style="left:407px;top:674px;color:#222;letter-spacing:-0.25px">D50-USQ1052</div><div class="t" style="left:557px;top:674px;color:#222">.5hp motor assy</div><div class="t" style="left:961px;top:674px;color:#222">5</div><div class="t" style="left:1111px;top:674px;color:#222">Pieces</div><div class="t" style="left:1300px;width:103.5px;text-align:right;top:674px;color:#222">1</div>
<div class="a" style="left:404px;top:692px;width:1003px;height:1px;background:#dadada"></div>
<div class="t" style="left:407px;top:701px;color:#222;letter-spacing:-0.25px">DAA-N76-46P</div><div class="t" style="left:557px;top:701px;color:#222">Pump Body</div><div class="t" style="left:961px;top:701px;color:#222">5</div><div class="t" style="left:1111px;top:701px;color:#222">Pieces</div><div class="t" style="left:1300px;width:103.5px;text-align:right;top:701px;color:#222">1</div>
<div class="a" style="left:404px;top:719px;width:1003px;height:1px;background:#dadada"></div>
<div class="t" style="left:407px;top:728px;color:#222;letter-spacing:-0.25px">DAA-C35-5</div><div class="t" style="left:557px;top:728px;color:#222">Pad, Rubber</div><div class="t" style="left:961px;top:728px;color:#222">20</div><div class="t" style="left:1111px;top:728px;color:#222">Pieces</div><div class="t" style="left:1300px;width:103.5px;text-align:right;top:728px;color:#222">1</div>
<div class="a" style="left:404px;top:746px;width:1003px;height:1px;background:#dadada"></div>
<div class="t" style="left:407px;top:755px;color:#222;letter-spacing:-0.25px">DAA-J105-40PNB</div><div class="t" style="left:557px;top:755px;color:#222">Impeller</div><div class="t" style="left:961px;top:755px;color:#222">5</div><div class="t" style="left:1111px;top:755px;color:#222">Pieces</div><div class="t" style="left:1300px;width:103.5px;text-align:right;top:755px;color:#222">1</div>
<div class="a" style="left:404px;top:773px;width:1003px;height:1px;background:#dadada"></div>
<div class="t" style="left:407px;top:782px;color:#222;letter-spacing:-0.25px">DAA-U109-6A</div><div class="t" style="left:557px;top:782px;color:#222">Shaft Seal, all models</div><div class="t" style="left:961px;top:782px;color:#222">5</div><div class="t" style="left:1111px;top:782px;color:#222">Pieces</div><div class="t" style="left:1300px;width:103.5px;text-align:right;top:782px;color:#222">1</div>
<div class="a" style="left:404px;top:800px;width:1003px;height:1px;background:#dadada"></div>
<div class="t" style="left:407px;top:809px;color:#222;letter-spacing:-0.25px">DAA-J000000R2</div><div class="t" style="left:557px;top:809px;color:#222">O-Ring, 2.25", All models</div><div class="t" style="left:961px;top:809px;color:#222">10</div><div class="t" style="left:1111px;top:809px;color:#222">Pieces</div><div class="t" style="left:1300px;width:103.5px;text-align:right;top:809px;color:#222">1</div>
<div class="a" style="left:404px;top:827px;width:1003px;height:1px;background:#dadada"></div>

<div class="a" style="left:1408px;top:666px;width:16px;height:166px;background:#efefef"></div>
<div class="a" style="left:1409px;top:683px;width:14px;height:54px;background:#c2c2c2"></div>
<svg style="left:1408px;top:666px" width="16" height="166"><path d="M4.5 11.5 L8 8 L11.5 11.5 M4.5 155 L8 158.5 L11.5 155" fill="none" stroke="#444" stroke-width="1.3"/></svg>
<!-- buttons -->
<div class="a" style="left:399px;top:841px;width:80px;height:28px;border:1px solid #b5b5b5;background:#fff"></div>
<svg style="left:405px;top:846px" width="20" height="18"><path d="M3.2 8.4 L9.2 14.2 L18.3 4.7" fill="none" stroke="#000" stroke-width="3.6"/></svg>
<div class="t" style="left:430px;top:850px;color:#222">Confirm</div>
<div class="a" style="left:1136px;top:841px;width:97px;height:28px;border:1px solid #e3e3e3;background:#fff"></div>
<svg style="left:1141px;top:846px" width="20" height="18"><path d="M3.2 8.4 L9.2 14.2 L18.3 4.7" fill="none" stroke="#c8c8c8" stroke-width="3.4"/></svg>
<div class="t" style="left:1166px;top:850px;color:#c0c0c0">Confirm All</div>
<div class="a" style="left:1247px;top:841px;width:79px;height:28px;border:1px solid #b5b5b5;background:#fff"></div>
<svg style="left:1254px;top:846px" width="18" height="18"><path d="M1.5 1.5 H12.5 L15.5 4.5 V15.5 H1.5 Z" fill="#000"/><rect x="4.5" y="1.5" width="7" height="4.5" fill="#fff"/><rect x="9" y="2.3" width="1.6" height="3" fill="#000"/><rect x="4" y="9.5" width="9" height="6" fill="#fff"/><rect x="4" y="11" width="9" height="4.5" fill="#000"/></svg>
<div class="t" style="left:1277px;top:850px;color:#222;letter-spacing:-0.3px">Save All</div>
<div class="a" style="left:1340px;top:847px;width:1px;height:17px;background:#bdbdbd"></div>
<div class="a" style="left:1355px;top:841px;width:73px;height:28px;border:1px solid #b5b5b5;background:#fff"></div>
<svg style="left:1361px;top:845px" width="20" height="20"><circle cx="10.5" cy="10.3" r="8.5" fill="#000"/><path d="M6.5 14.3 L14.5 6.3" stroke="#fff" stroke-width="2.2"/></svg>
<div class="t" style="left:1386px;top:850px;color:#222;letter-spacing:-0.4px">Cancel</div>

</body></html>
